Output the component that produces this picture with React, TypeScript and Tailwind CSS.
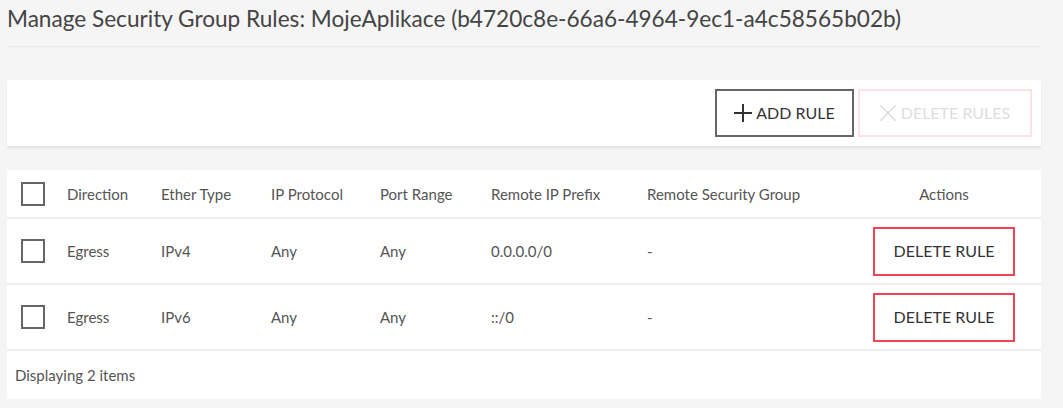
const rules = [
  { direction: 'Egress', ether: 'IPv4', protocol: 'Any', port: 'Any', prefix: '0.0.0.0/0', group: '-' },
  { direction: 'Egress', ether: 'IPv6', protocol: 'Any', port: 'Any', prefix: '::/0', group: '-' },
]

const cols = 'grid grid-cols-[46px_94px_110px_109px_111px_156px_214px_1fr] items-center'

function Checkbox() {
  return <span className="block w-6 h-6 border-2 border-[#666666] bg-white" />
}

export default function App() {
  return (
    <div
      className="min-h-screen bg-[#f5f5f5] text-[#555555] pl-[7px] pr-[22px]"
      style={{ fontFamily: 'Lato, "Open Sans", sans-serif' }}
    >
      {/* Title */}
      <h1 className="text-[22.6px] leading-[30px] pt-[4px] text-[#444444] pb-[12px] border-b border-[#e8e8e8]">
        Manage Security Group Rules: MojeAplikace (b4720c8e-66a6-4964-9ec1-a4c58565b02b)
      </h1>

      {/* Toolbar */}
      <div className="mt-[33px] bg-white shadow-[0_2px_2px_rgba(0,0,0,0.08)] flex justify-end gap-[4px] pt-[9px] pb-[9px] pr-[9px]">
        <button className="h-[48px] w-[139px] border-2 border-[#666666] flex items-center justify-center gap-[4px] text-[16px] text-[#333333]">
          <svg width="18" height="18" viewBox="0 0 18 18" stroke="#333333" strokeWidth="2">
            <line x1="9" y1="0" x2="9" y2="18" />
            <line x1="0" y1="9" x2="18" y2="9" />
          </svg>
          ADD RULE
        </button>
        <button className="h-[48px] w-[174px] border-2 border-[#fde3e7] flex items-center justify-center gap-[5px] text-[16px] text-[#dedede]">
          <svg width="16" height="16" viewBox="0 0 16 16" stroke="#dedede" strokeWidth="1.5">
            <line x1="0" y1="0" x2="16" y2="16" />
            <line x1="16" y1="0" x2="0" y2="16" />
          </svg>
          DELETE RULES
        </button>
      </div>

      {/* Table */}
      <div className="mt-[24px] bg-white text-[15px]">
        <div className={`${cols} h-[49px] pt-[1px] border-b-2 border-[#eeeeee]`}>
          <div className="pl-[14px]"><Checkbox /></div>
          <div className="pl-[14px]">Direction</div>
          <div className="pl-[14px]">Ether Type</div>
          <div className="pl-[14px]">IP Protocol</div>
          <div className="pl-[14px]">Port Range</div>
          <div className="pl-[14px]">Remote IP Prefix</div>
          <div className="pl-[14px]">Remote Security Group</div>
          <div className="text-center">Actions</div>
        </div>
        {rules.map((r, i) => (
          <div key={i} className={`${cols} h-[66px] border-b-2 border-[#eeeeee]`}>
            <div className="pl-[14px]"><Checkbox /></div>
            <div className="pl-[14px]">{r.direction}</div>
            <div className="pl-[14px]">{r.ether}</div>
            <div className="pl-[14px]">{r.protocol}</div>
            <div className="pl-[14px]">{r.port}</div>
            <div className="pl-[14px]">{r.prefix}</div>
            <div className="pl-[14px]">{r.group}</div>
            <div className="flex justify-center">
              <button className="h-[49px] w-[142px] border-2 border-[#f04452] text-[16px] text-[#333333]">
                DELETE RULE
              </button>
            </div>
          </div>
        ))}
        <div className="h-[48px] flex items-center pl-[8px] text-[15px]">Displaying 2 items</div>
      </div>
    </div>
  )
}
